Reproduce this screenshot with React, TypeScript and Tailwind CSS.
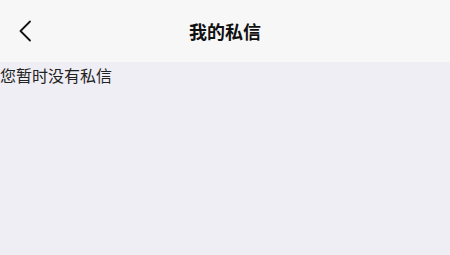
import React from "react";

export default function App() {
  return (
    <div className="w-[450px] h-[255px] flex flex-col bg-[#efeef4]" style={{ fontFamily: '"Noto Sans CJK SC", "Noto Sans", sans-serif' }}>
      <div className="h-[62px] bg-[#f7f7f7] flex items-center relative shrink-0">
        <div className="pl-[18px] flex items-center">
          <svg width="14" height="22" viewBox="0 0 14 22" fill="none">
            <path d="M12 1.5 L2.5 11 L12 20.5" stroke="#111" strokeWidth="1.8" strokeLinecap="round" strokeLinejoin="round" />
          </svg>
        </div>
        <div className="absolute inset-0 flex items-center justify-center text-[18px] font-bold text-[#111]">我的私信</div>
      </div>
      <div className="text-[16px] leading-[24px] text-[#222] pt-[1px]">您暂时没有私信</div>
    </div>
  );
}
